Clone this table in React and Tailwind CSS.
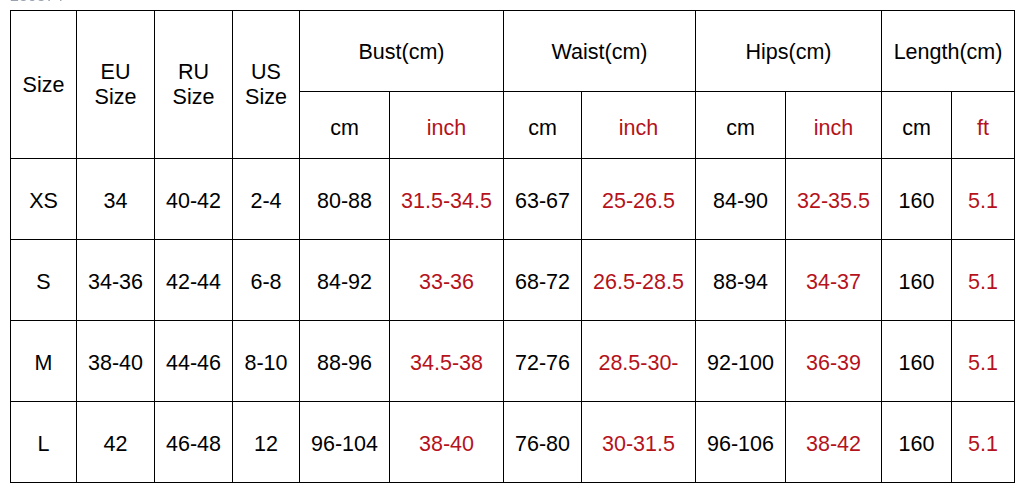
import React from 'react'

const widths = [66, 78, 78, 67, 90, 114, 78, 114, 90, 96, 70, 63]

const rows = [
  ['XS', '34', '40-42', '2-4', '80-88', '31.5-34.5', '63-67', '25-26.5', '84-90', '32-35.5', '160', '5.1'],
  ['S', '34-36', '42-44', '6-8', '84-92', '33-36', '68-72', '26.5-28.5', '88-94', '34-37', '160', '5.1'],
  ['M', '38-40', '44-46', '8-10', '88-96', '34.5-38', '72-76', '28.5-30-', '92-100', '36-39', '160', '5.1'],
  ['L', '42', '46-48', '12', '96-104', '38-40', '76-80', '30-31.5', '96-106', '38-42', '160', '5.1'],
]

// inch / ft columns are red
const redCols = [5, 7, 9, 11]

function App() {
  return (
    <div className="w-[1025px] h-[485px] bg-white overflow-hidden font-['Liberation_Sans',Arial,sans-serif] text-black">
      {/* cut-off caption above the table */}
      <div className="h-[10px] overflow-hidden pl-[10px]">
        <div className="-mt-[12px] text-[16px] leading-[16px] text-gray-400 blur-[0.4px]">250374</div>
      </div>

      <table className="ml-[10px] w-[1005px] table-fixed border-collapse text-[21.5px] leading-[25px] text-center">
        <colgroup>
          {widths.map((w, i) => (
            <col key={i} style={{ width: w }} />
          ))}
        </colgroup>
        <thead>
          <tr className="h-[81px]">
            <th rowSpan={2} className="border border-black font-normal pt-[2px]">Size</th>
            <th rowSpan={2} className="border border-black font-normal">EU<br />Size</th>
            <th rowSpan={2} className="border border-black font-normal">RU<br />Size</th>
            <th rowSpan={2} className="border border-black font-normal">US<br />Size</th>
            <th colSpan={2} className="border border-black font-normal pt-[3px]">Bust(cm)</th>
            <th colSpan={2} className="border border-black font-normal pt-[3px]">Waist(cm)</th>
            <th colSpan={2} className="border border-black font-normal pt-[3px]">Hips(cm)</th>
            <th colSpan={2} className="border border-black font-normal pt-[3px]">Length(cm)</th>
          </tr>
          <tr className="h-[67px]">
            <th className="border border-black font-normal pt-[6px]">cm</th>
            <th className="border border-black font-normal pt-[6px] text-[#b5121b]">inch</th>
            <th className="border border-black font-normal pt-[6px]">cm</th>
            <th className="border border-black font-normal pt-[6px] text-[#b5121b]">inch</th>
            <th className="border border-black font-normal pt-[6px]">cm</th>
            <th className="border border-black font-normal pt-[6px] text-[#b5121b]">inch</th>
            <th className="border border-black font-normal pt-[6px]">cm</th>
            <th className="border border-black font-normal pt-[6px] text-[#b5121b]">ft</th>
          </tr>
        </thead>
        <tbody>
          {rows.map((row, r) => (
            <tr key={r} className="h-[81px]">
              {row.map((cell, c) => (
                <td
                  key={c}
                  className={`border border-black whitespace-nowrap pt-[4px] ${redCols.includes(c) ? 'text-[#b5121b]' : ''}`}
                >
                  {cell}
                </td>
              ))}
            </tr>
          ))}
        </tbody>
      </table>
    </div>
  )
}

export default App
